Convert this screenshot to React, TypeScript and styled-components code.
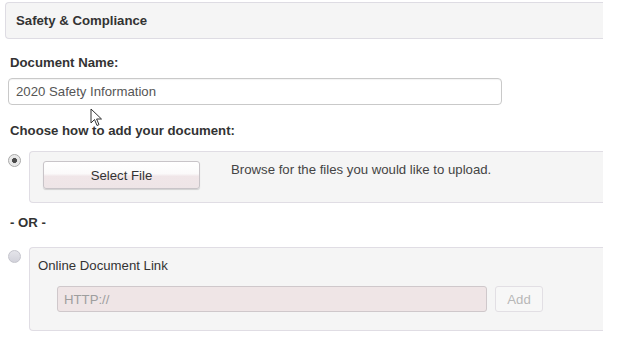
import React from "react";
import styled, { createGlobalStyle } from "styled-components";

const Global = createGlobalStyle`
  html, body { margin: 0; padding: 0; background: #fff; }
  body { font-family: "Liberation Sans", Arial, sans-serif; font-size: 13.2px; color: #333; }
  * { box-sizing: border-box; }
`;

const Page = styled.div`
  position: relative;
  width: 621px;
  height: 343px;
  overflow: hidden;
  padding-top: 2px;
`;

const Header = styled.div`
  margin-left: 5px;
  width: 598px;
  height: 37px;
  background: #f5f5f5;
  border: 1px solid #dedce3;
  border-right: none;
  border-radius: 4px 0 0 4px;
  padding-left: 10px;
  display: flex;
  align-items: center;
  font-weight: bold;
  color: #333;
`;

const Label = styled.div<{ $mt: number }>`
  margin-top: ${(p) => p.$mt}px;
  margin-left: 10px;
  line-height: 16px;
  font-weight: bold;
  color: #333;
`;

const TextInput = styled.div`
  margin-top: 7px;
  margin-left: 8px;
  width: 494px;
  height: 27px;
  border: 1px solid #c9c9c9;
  border-radius: 4px;
  background: #fff;
  padding-left: 7px;
  display: flex;
  align-items: center;
  color: #555;
  box-shadow: inset 0 1px 1px rgba(0,0,0,0.05);
`;

const OptionRow = styled.div<{ $mt: number }>`
  margin-top: ${(p) => p.$mt}px;
  display: flex;
  align-items: flex-start;
`;

const Radio = styled.span<{ $checked?: boolean }>`
  margin-left: 8px;
  margin-top: 3px;
  width: 13px;
  height: 13px;
  border-radius: 50%;
  border: 1px solid ${(p) => (p.$checked ? "#a8a8a8" : "#c4c4cc")};
  background: ${(p) =>
    p.$checked
      ? "radial-gradient(circle at 50% 50%, #4a4a4a 0, #4a4a4a 2.2px, #e4e4e4 2.8px, #f2f2f2 100%)"
      : "linear-gradient(#e4e4ea, #d2d2da)"};
  flex: none;
`;

const Panel = styled.div<{ $h: number }>`
  margin-left: 8px;
  width: 574px;
  height: ${(p) => p.$h}px;
  background: #f5f5f5;
  border: 1px solid #e0dde4;
  border-right: none;
  border-radius: 4px 0 0 4px;
`;

const FileRow = styled.div`
  display: flex;
  align-items: flex-start;
  padding: 9px 0 0 13px;
`;

const SelectButton = styled.div`
  width: 157px;
  height: 28px;
  padding-top: 1px;
  border: 1px solid #c8c4c8;
  border-radius: 3px;
  background: linear-gradient(#ffffff 0%, #fbfafa 45%, #f0e6e8 55%, #eee5e7 100%);
  box-shadow: 0 1px 1px rgba(0,0,0,0.15);
  display: flex;
  align-items: center;
  justify-content: center;
  color: #333;
`;

const Hint = styled.div`
  margin-left: 31px;
  margin-top: 1px;
  line-height: 16px;
  color: #444;
`;

const LinkTitle = styled.div`
  padding: 10px 0 0 8px;
  line-height: 16px;
  color: #333;
`;

const LinkRow = styled.div`
  display: flex;
  margin-top: 12px;
  margin-left: 27px;
  gap: 8px;
`;

const UrlInput = styled.div`
  width: 430px;
  height: 26px;
  border: 1px solid #cfc8cb;
  border-radius: 3px;
  background: #efe5e6;
  padding-left: 6px;
  display: flex;
  align-items: center;
  color: #9e9e9e;
`;

const AddButton = styled.div`
  width: 48px;
  height: 26px;
  border: 1px solid #e2dfe4;
  border-radius: 3px;
  background: #f7f7f7;
  display: flex;
  align-items: center;
  justify-content: center;
  color: #b8b8b8;
`;

const Cursor = styled.svg`
  position: absolute;
  left: 90px;
  top: 108px;
`;

export default function App() {
  return (
    <>
      <Global />
      <Page>
        <Header>Safety &amp; Compliance</Header>
        <Label $mt={16}>Document Name:</Label>
        <TextInput>2020 Safety Information</TextInput>
        <Label $mt={18}>Choose how to add your document:</Label>
        <OptionRow $mt={12}>
          <Radio $checked />
          <Panel $h={52}>
            <FileRow>
              <SelectButton>Select File</SelectButton>
              <Hint>Browse for the files you would like to upload.</Hint>
            </FileRow>
          </Panel>
        </OptionRow>
        <Label $mt={12}>- OR -</Label>
        <OptionRow $mt={16}>
          <Radio />
          <Panel $h={84}>
            <LinkTitle>Online Document Link</LinkTitle>
            <LinkRow>
              <UrlInput>HTTP://</UrlInput>
              <AddButton>Add</AddButton>
            </LinkRow>
          </Panel>
        </OptionRow>
        <Cursor width="13" height="19" viewBox="0 0 13 19">
          <path d="M1 1 L1 15 L4.5 11.5 L7 17.5 L9 16.6 L6.6 11 L11.5 11 Z" fill="#fff" stroke="#333" strokeWidth="1" strokeLinejoin="round" />
        </Cursor>
      </Page>
    </>
  );
}
